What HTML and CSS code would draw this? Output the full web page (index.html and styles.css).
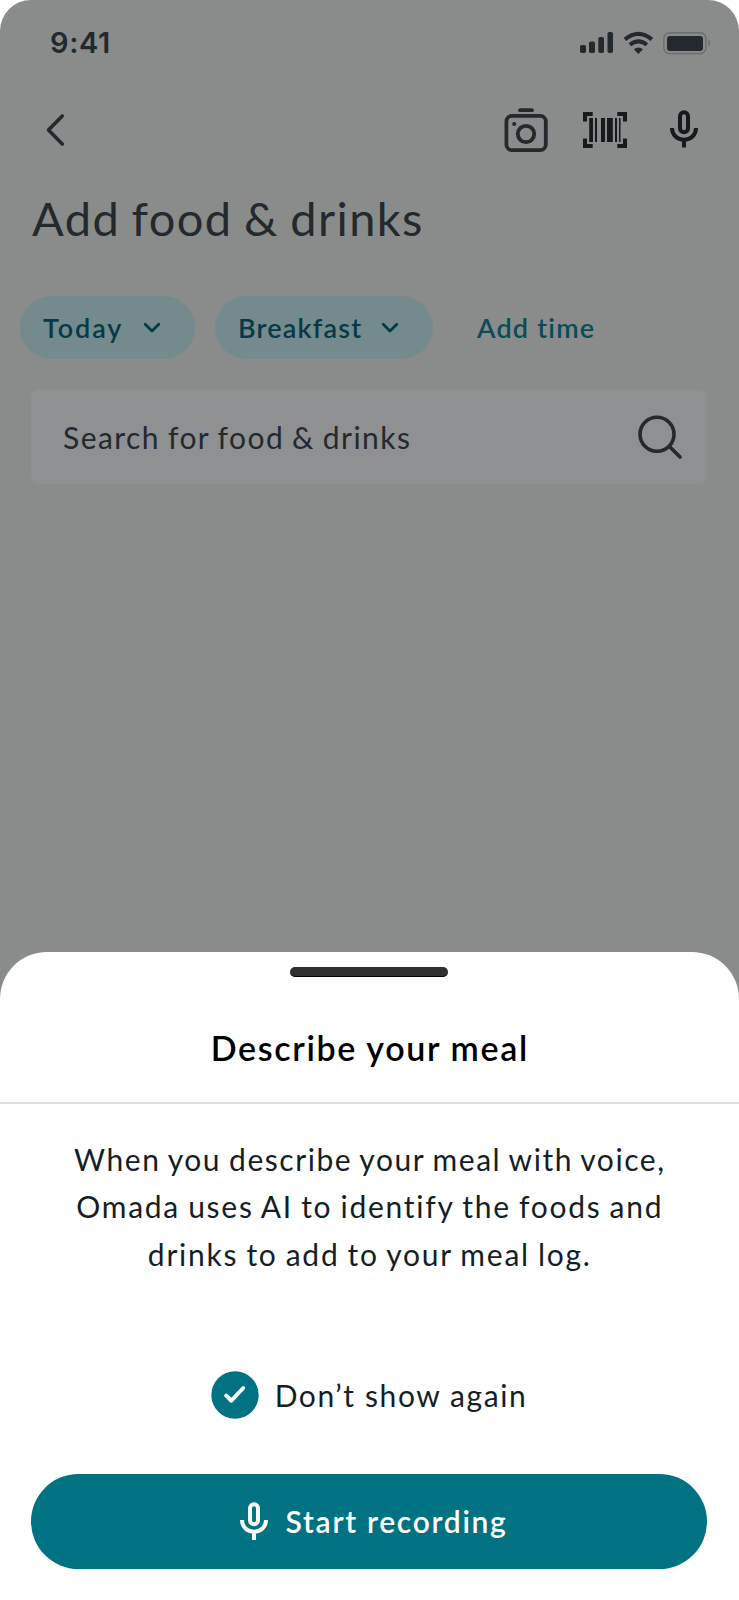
FILE: index.html
```html
<!DOCTYPE html>
<html lang="en">
<head>
    <meta charset="UTF-8">
    <meta name="viewport" content="width=device-width, initial-scale=1.0">
    <title>Add food &amp; drinks</title>
    <link rel="stylesheet" href="styles.css">
</head>
<body>
    <div class="phone">
        <!-- Status bar -->
        <div class="status-bar">
            <span class="time">9:41</span>
            <svg class="status-icons" width="134" height="24" viewBox="0 0 134 24">
                <g fill="#23292d">
                    <rect x="1" y="14" width="6" height="8" rx="1.8"/>
                    <rect x="10" y="10.5" width="6" height="11.5" rx="1.8"/>
                    <rect x="19.3" y="6" width="5.7" height="16" rx="1.8"/>
                    <rect x="28.5" y="1" width="5.5" height="21" rx="1.8"/>
                    <path d="M59.4 23 L54.8 18.3 Q59.4 14.8 64 18.3 Z"/>
                    <rect x="88" y="5" width="36" height="15" rx="3"/>
                </g>
                <path d="M45.9 8.4 Q59.4 -2.6 72.9 8.4" fill="none" stroke="#23292d" stroke-width="4"/>
                <path d="M50.9 13.8 Q59.4 7 67.9 13.8" fill="none" stroke="#23292d" stroke-width="4"/>
                <rect x="84.9" y="1.9" width="42" height="20.7" rx="5.5" fill="none" stroke="#6d7071" stroke-width="1.6"/>
                <path d="M129.2 8.6 Q131.2 9.6 131.2 12.2 Q131.2 14.8 129.2 15.8 Z" fill="#6d7071"/>
            </svg>
        </div>

        <!-- Navigation -->
        <div class="nav">
            <svg class="back" width="24" height="36" viewBox="0 0 24 36">
                <path d="M18.3 4 L4.5 18 L18.3 32" fill="none" stroke="#23292d" stroke-width="3.6" stroke-linecap="round" stroke-linejoin="round"/>
            </svg>
            <svg class="camera" width="44" height="46" viewBox="0 0 44 46">
                <g fill="none" stroke="#23292d" stroke-width="3.8">
                    <rect x="2.4" y="8.9" width="39.4" height="34.2" rx="5.5"/>
                    <circle cx="22" cy="27" r="8.2"/>
                    <path d="M16 3.2 H28" stroke-linecap="round"/>
                </g>
                <circle cx="10.2" cy="17" r="2.1" fill="#23292d"/>
            </svg>
            <svg class="barcode" width="44" height="36" viewBox="0 0 44 36">
                <path d="M2 9.5 V2 H9.7 M34.3 2 H42 V9.5 M42 26.5 V34 H34.3 M9.7 34 H2 V26.5" fill="none" stroke="#17191c" stroke-width="4"/>
                <g fill="#17191c">
                    <rect x="6.2" y="6" width="3.8" height="24"/>
                    <rect x="12" y="6" width="2" height="24"/>
                    <rect x="18" y="6" width="4" height="24"/>
                    <rect x="24" y="6" width="5.8" height="24"/>
                    <rect x="32" y="6" width="2" height="24"/>
                    <rect x="36" y="6" width="1.5" height="24"/>
                </g>
            </svg>
            <svg class="mic" width="28" height="38" viewBox="0 0 28 38">
                <g fill="none" stroke="#17191c" stroke-width="4">
                    <rect x="10" y="2.2" width="8" height="20" rx="4"/>
                    <path d="M2 18 C2 25 7.3 29.7 14 29.7 C20.7 29.7 26 25 26 18 M14 29.7 V37.5"/>
                </g>
            </svg>
        </div>

        <h1>Add food &amp; drinks</h1>

        <!-- Day and meal filters -->
        <div class="filters">
            <button class="pill today">
                <span>Today</span>
                <svg width="18" height="12" viewBox="0 0 18 12"><path d="M2.2 2.3 L9 8.9 L15.8 2.3" fill="none" stroke="#063a47" stroke-width="2.8" stroke-linecap="round" stroke-linejoin="round"/></svg>
            </button>
            <button class="pill breakfast">
                <span>Breakfast</span>
                <svg width="18" height="12" viewBox="0 0 18 12"><path d="M2.2 2.3 L9 8.9 L15.8 2.3" fill="none" stroke="#063a47" stroke-width="2.8" stroke-linecap="round" stroke-linejoin="round"/></svg>
            </button>
            <a class="add-time">Add time</a>
        </div>

        <div class="search">
            <span>Search for food &amp; drinks</span>
            <svg width="46" height="46" viewBox="0 0 46 46">
                <g fill="none" stroke="#23292d" stroke-width="3.6" stroke-linecap="round">
                    <circle cx="20" cy="20.3" r="17"/>
                    <path d="M32.4 32.5 L43 43"/>
                </g>
            </svg>
        </div>

        <!-- Bottom sheet -->
        <div class="sheet">
            <div class="handle"></div>
            <h2>Describe your meal</h2>
            <p class="description">
                <span class="line-1">When you describe your meal with voice,</span><br>
                <span>Omada uses AI to identify the foods and</span><br>
                <span>drinks to add to your meal log.</span>
            </p>
            <div class="dont-show">
                <svg width="48" height="48" viewBox="0 0 48 48">
                    <circle cx="24" cy="24" r="23.7" fill="#007282"/>
                    <path d="M15.2 24.6 L20.4 29.7 L32.2 17" fill="none" stroke="#fff" stroke-width="4" stroke-linecap="round" stroke-linejoin="round"/>
                </svg>
                <span>Don’t show again</span>
            </div>
            <button class="record">
                <svg width="28" height="38" viewBox="0 0 28 38">
                    <g fill="none" stroke="#f7f7f7" stroke-width="4">
                        <rect x="10" y="2.2" width="8" height="20" rx="4"/>
                        <path d="M2 18 C2 25 7.3 29.7 14 29.7 C20.7 29.7 26 25 26 18 M14 29.7 V38"/>
                    </g>
                </svg>
                <span>Start recording</span>
            </button>
        </div>
    </div>
</body>
</html>
```
FILE: styles.css
```css
* {
    box-sizing: border-box;
}

body {
    margin: 0;
    background-color: #fff;
    font-family: Lato, 'Liberation Sans', sans-serif;
    color: #23292d;
}

svg {
    display: block;
    flex: none;
}

button {
    border: none;
    font-family: inherit;
    cursor: pointer;
}

span, a {
    white-space: nowrap;
}

.phone {
    width: 738.6px;
    height: 1600px;
    display: flex;
    flex-direction: column;
    overflow: hidden;
    background-color: #8a8c8b;
    border-radius: 31px 31px 0 0;
}

/* Status bar */
.status-bar {
    display: flex;
    justify-content: space-between;
    height: 60px;
    padding: 31px 25.6px 0 50px;
}

.time {
    font-family: Inter, sans-serif;
    font-size: 29px;
    font-weight: 600;
    line-height: 24px;
    letter-spacing: 0.6px;
}

/* Navigation */
.nav {
    display: flex;
    height: 100px;
    padding: 47px 40.6px 0 43.5px;
}

.back {
    margin-top: 5px;
}

.camera {
    margin-left: auto;
}

.barcode {
    margin: 5px 43px 0 35px;
}

.mic {
    margin-top: 3px;
}

h1 {
    height: 136px;
    margin: 0;
    padding-left: 32px;
    font-size: 47px;
    font-weight: 400;
    line-height: 116px;
    letter-spacing: 1.4px;
    word-spacing: -2px;
    white-space: nowrap;
}

/* Filters */
.filters {
    display: flex;
    align-items: center;
    height: 63px;
    padding-left: 20px;
}

.pill {
    display: flex;
    align-items: center;
    justify-content: space-between;
    height: 63px;
    margin-right: 20px;
    padding: 0 34px 0 23px;
    border-radius: 32px;
    background-color: #748a8c;
    color: #063a47;
    font-size: 27px;
    font-weight: 600;
    letter-spacing: 1.2px;
}

.today {
    width: 175px;
    letter-spacing: 1.9px;
}

.breakfast {
    width: 218px;
}

.add-time {
    margin-left: 24px;
    color: #0a4c57;
    font-size: 27px;
    font-weight: 600;
    letter-spacing: 1.2px;
}

/* Search field */
.search {
    display: flex;
    align-items: center;
    justify-content: space-between;
    height: 94px;
    margin: 31px 31.6px 0 31px;
    padding: 0 24px 0 32px;
    border-radius: 8px;
    background-color: #8f9092;
    font-size: 30px;
    letter-spacing: 1.45px;
    word-spacing: -1.2px;
}

/* Bottom sheet */
.sheet {
    display: flex;
    flex-direction: column;
    align-items: center;
    height: 648px;
    margin-top: auto;
    padding-top: 15px;
    background-color: #fff;
    border-radius: 47px 47px 0 0;
    color: #141e26;
}

.handle {
    flex: none;
    width: 158px;
    height: 10px;
    border-radius: 5px;
    background-color: #303030;
    border-bottom: 1px solid #000;
}

h2 {
    align-self: stretch;
    flex: none;
    height: 127px;
    margin: 0;
    padding: 47px 0 0 1px;
    border-bottom: 2px solid #dddfe4;
    color: #000;
    font-size: 34px;
    font-weight: 600;
    line-height: 48px;
    letter-spacing: 1.65px;
    text-align: center;
}

.description {
    margin: 32px 0 0;
    padding-left: 1px;
    font-size: 30px;
    line-height: 47.3px;
    letter-spacing: 1.75px;
    word-spacing: -1.3px;
    text-align: center;
}

.line-1 {
    letter-spacing: 1.55px;
}

.dont-show {
    display: flex;
    align-items: center;
    gap: 15.5px;
    margin-top: 93px;
    font-size: 30px;
    letter-spacing: 1.6px;
}

.record {
    display: flex;
    align-items: center;
    justify-content: center;
    gap: 17.5px;
    width: 676px;
    height: 95px;
    margin-top: 55px;
    padding-left: 15px;
    border-radius: 48px;
    background-color: #007282;
    color: #fff;
    font-size: 30px;
    font-weight: 600;
    letter-spacing: 1.7px;
}
```
